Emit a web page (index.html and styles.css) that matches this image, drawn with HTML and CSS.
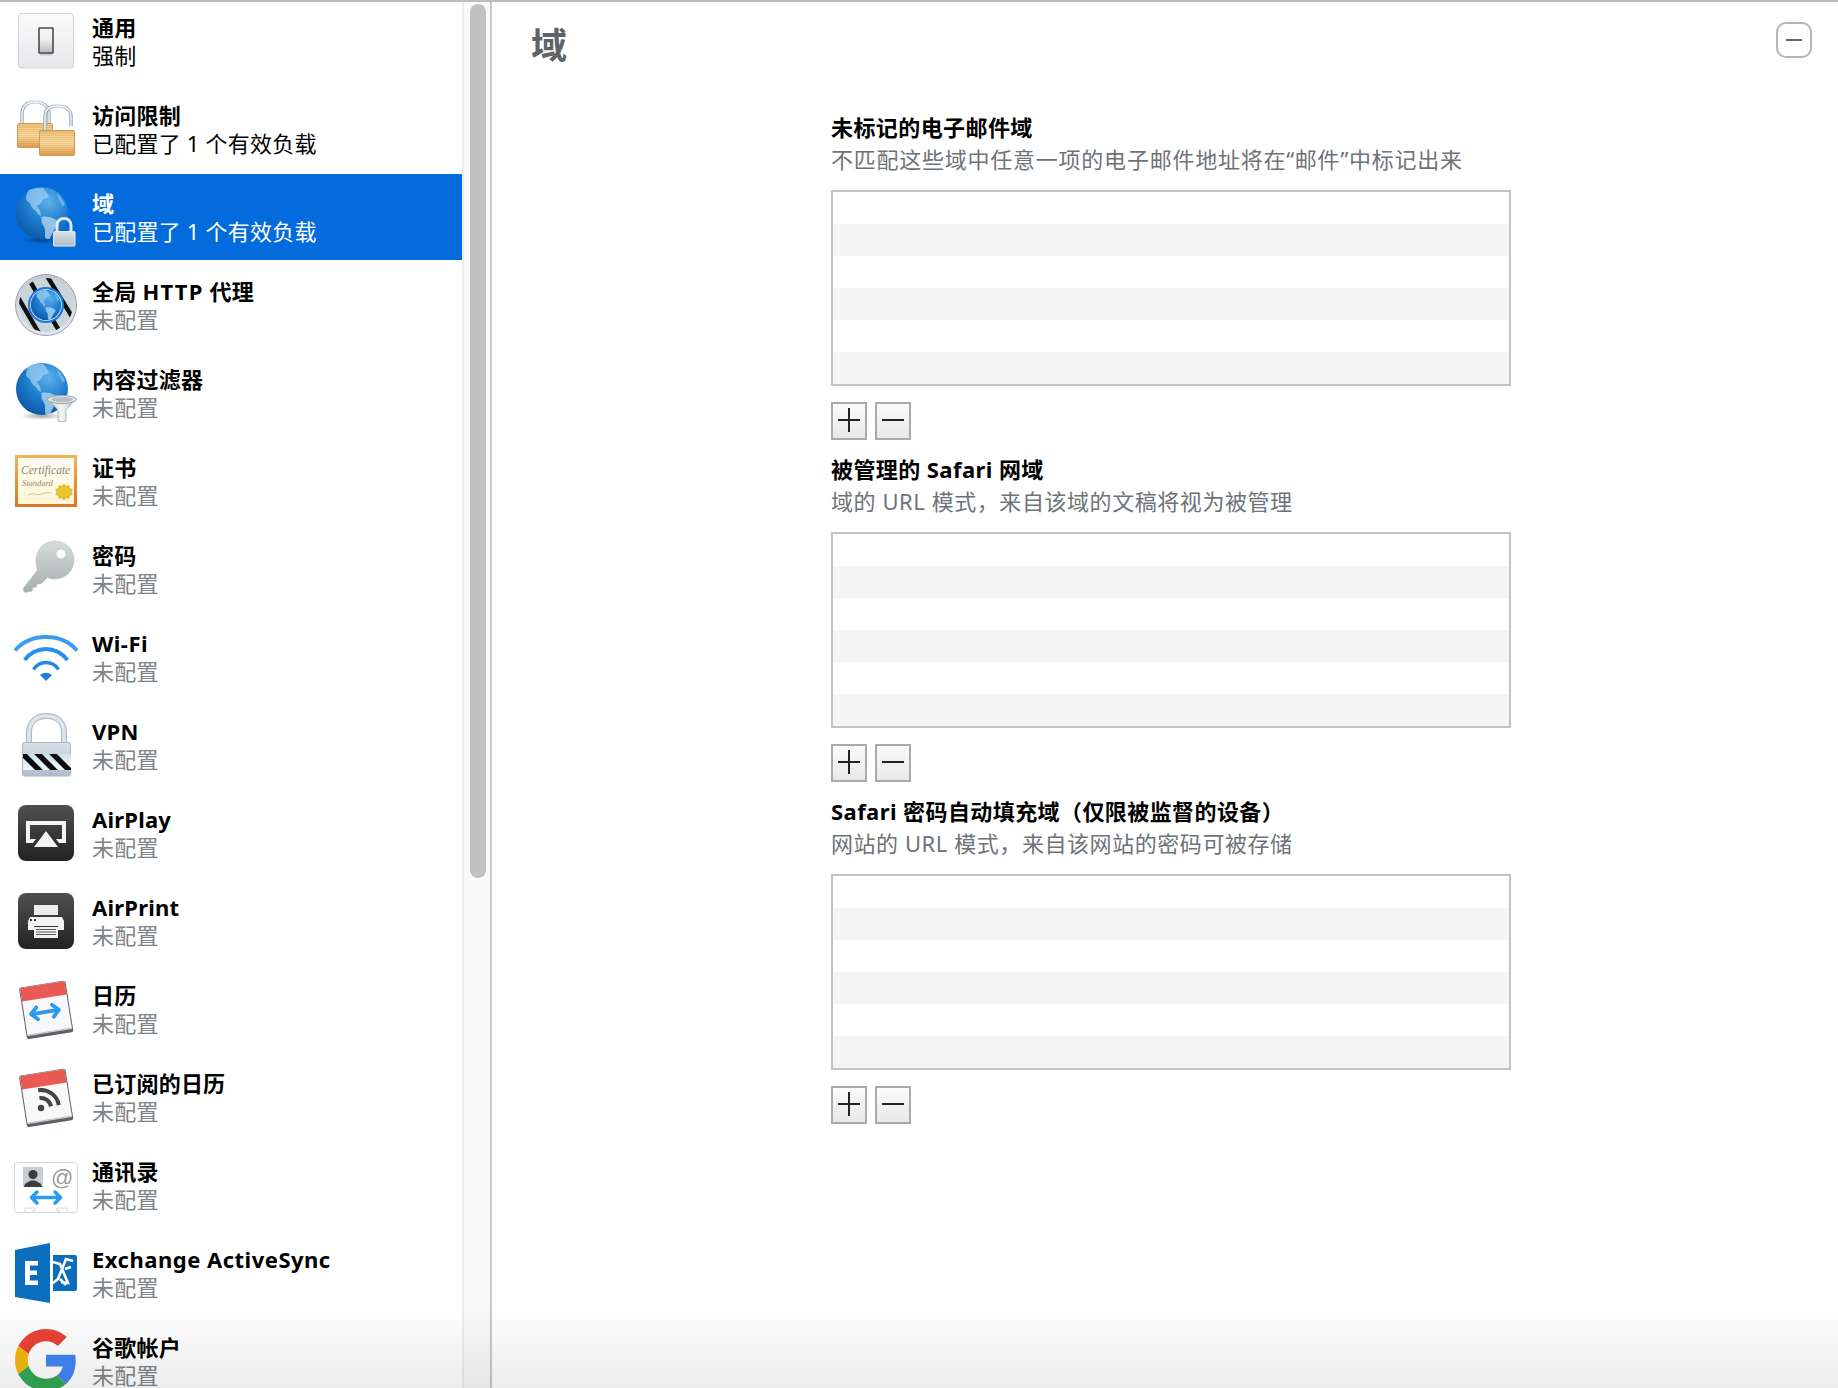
FILE: index.html
```html
<!DOCTYPE html>
<html lang="zh-CN">
<head>
<meta charset="utf-8">
<title>域</title>
<link rel="stylesheet" href="styles.css">
</head>
<body>
<svg class="defs" aria-hidden="true">
  <defs>
    <linearGradient id="gSwitchBg" x1="0" y1="0" x2="0" y2="1"><stop offset="0" stop-color="#fbfbfc"/><stop offset="1" stop-color="#e6e7ea"/></linearGradient>
    <linearGradient id="gSwitch" x1="0" y1="0" x2="0" y2="1"><stop offset="0" stop-color="#f4f4f4"/><stop offset=".45" stop-color="#f0f0f0"/><stop offset="1" stop-color="#b8b8b8"/></linearGradient>
    <pattern id="pBrass" width="4" height="2" patternUnits="userSpaceOnUse"><rect width="4" height="1" fill="#c88a38" fill-opacity=".22"/></pattern>
    <linearGradient id="gBrass" x1="0" y1="0" x2="0" y2="1"><stop offset="0" stop-color="#eec27a"/><stop offset=".5" stop-color="#f8dca0"/><stop offset="1" stop-color="#e09c4a"/></linearGradient>
    <linearGradient id="gSteel" x1="0" y1="0" x2="0" y2="1"><stop offset="0" stop-color="#d8dfe8"/><stop offset="1" stop-color="#b0bccc"/></linearGradient>
    <linearGradient id="gShackle" x1="0" y1="0" x2="1" y2="0"><stop offset="0" stop-color="#9aa6b6"/><stop offset=".5" stop-color="#d4dae2"/><stop offset="1" stop-color="#98a4b4"/></linearGradient>
    <radialGradient id="gGlobe" cx=".62" cy=".28" r=".85"><stop offset="0" stop-color="#5fb0ea"/><stop offset=".5" stop-color="#1c7ccd"/><stop offset="1" stop-color="#0a4f9c"/></radialGradient>
    <radialGradient id="gShadow"><stop offset="0" stop-color="#000" stop-opacity=".35"/><stop offset="1" stop-color="#000" stop-opacity="0"/></radialGradient>
    <linearGradient id="gRing" x1="0" y1="0" x2="0" y2="1"><stop offset="0" stop-color="#c4c8d0"/><stop offset="1" stop-color="#e4e8ee"/></linearGradient>
    <linearGradient id="gFunnel" x1="0" y1="0" x2="1" y2="0"><stop offset="0" stop-color="#c0c8cc"/><stop offset=".5" stop-color="#f4f6f6"/><stop offset="1" stop-color="#aab4b8"/></linearGradient>
    <linearGradient id="gFrame" x1="0" y1="0" x2="0" y2="1"><stop offset="0" stop-color="#f0b454"/><stop offset="1" stop-color="#d8762a"/></linearGradient>
    <linearGradient id="gCream" x1="0" y1="0" x2="0" y2="1"><stop offset="0" stop-color="#fffdf4"/><stop offset="1" stop-color="#fff6d4"/></linearGradient>
    <linearGradient id="gKey" x1="0" y1="0" x2="0" y2="1"><stop offset="0" stop-color="#d6dcdc"/><stop offset="1" stop-color="#a6aeae"/></linearGradient>
    <linearGradient id="gTile" x1="0" y1="0" x2="0" y2="1"><stop offset="0" stop-color="#505050"/><stop offset="1" stop-color="#222222"/></linearGradient>
    <linearGradient id="gWindow" x1="0" y1="0" x2="0" y2="1"><stop offset="0" stop-color="#cfe2ea"/><stop offset="1" stop-color="#eef6f8"/></linearGradient>
    <clipPath id="cRing"><circle cx="32" cy="32" r="27"/></clipPath>
    <clipPath id="cWindow"><rect x="9" y="41" width="48" height="16"/></clipPath>
    <symbol id="globe" viewBox="0 0 64 64">
      <circle cx="28" cy="28" r="26" fill="url(#gGlobe)"/>
      <path d="M15 5C20 3 25 2.500 29 3c2 2 4 4 6 9-3 2-4 1-6 3-1 3-4 4-6 6 1 3 3 3 3.500 6l.5 4c-3-1-4-3-5-5-3-2-5-4-6-8-2-1-3-2-4-4 0-3 1-6 3-9z" fill="#9ccdf0" fill-opacity=".75"/>
      <path d="M27.500 32c3-1 5 0 8 0 3 1 6 2 9 5-1 3-3 5-4 7-2 3-3 7-5 10-1.500 0-3 0-4-1-1-3 0-6-.5-9-1-3-3-5-3.500-7 0-2 0-4 0-5z" fill="#b0d6f0" fill-opacity=".8"/>
      <path d="M43 9c3 2 6 6 8 11l-3 1c-2-4-4-8-5-12z" fill="#a8d4f2" fill-opacity=".5"/>
    </symbol>
    <symbol id="calbase" viewBox="0 0 64 64">
      <g transform="rotate(-9 31.500 31.500)">
        <rect x="8.500" y="7" width="47" height="52" rx="2" fill="#5a6068"/>
        <rect x="9.500" y="7.500" width="45" height="47.500" fill="#f8f8f8"/>
        <rect x="9.500" y="7.500" width="45" height="13.500" fill="#ea5a55"/>
        <rect x="9.500" y="54.500" width="45" height="1.500" fill="#c8c8c8"/>
      </g>
    </symbol>
  </defs>
</svg>

<div class="app">
  <aside class="sidebar">
    <div class="list">

      <div class="row">
        <svg class="icon" viewBox="0 0 64 64">
          <rect x="4.500" y="4.500" width="55" height="54.500" rx="2.500" fill="url(#gSwitchBg)" stroke="#d2d4d8"/>
          <rect x="25" y="19" width="14" height="25" rx=".5" fill="url(#gSwitch)" stroke="#4a4a4a" stroke-width="1.600"/>
          <rect x="26" y="44.500" width="12" height="2" fill="#000" fill-opacity=".15"/>
        </svg>
        <div class="text"><div class="name">通用</div><div class="sub on">强制</div></div>
      </div>

      <div class="row">
        <svg class="icon" viewBox="0 0 64 64">
          <path d="M8 27V18C8 9 13 5 21 5s14 4 14 13v9" fill="none" stroke="url(#gShackle)" stroke-width="3.500"/>
          <path d="M8 27V18C8 9 13 5 21 5s14 4 14 13v9" fill="none" stroke="#eef1f4" stroke-width="1.500"/>
          <rect x="3.500" y="26.500" width="35" height="24" rx="1.500" fill="url(#gBrass)" stroke="#c89a58"/>
          <rect x="4" y="27" width="34" height="23" fill="url(#pBrass)"/>
          <path d="M31 34V20C31 12 36 9 43.500 9S57 12 57 20v9" fill="none" stroke="url(#gShackle)" stroke-width="3.500"/>
          <path d="M31 34V20C31 12 36 9 43.500 9S57 12 57 20v9" fill="none" stroke="#eef1f4" stroke-width="1.500"/>
          <rect x="25.500" y="33.500" width="35" height="25" rx="1.500" fill="url(#gBrass)" stroke="#c89a58"/>
          <rect x="26" y="34" width="34" height="24" fill="url(#pBrass)"/>
        </svg>
        <div class="text"><div class="name">访问限制</div><div class="sub on">已配置了 1 个有效负载</div></div>
      </div>

      <div class="row sel">
        <svg class="icon" viewBox="0 0 64 64">
          <ellipse cx="28" cy="55" rx="22" ry="4" fill="url(#gShadow)"/>
          <use href="#globe" width="64" height="64"/>
          <path d="M43 47V40.500C43 36 46 33.500 50 33.500s7 2.500 7 7V47" fill="none" stroke="#e4e8ee" stroke-width="3"/>
          <rect x="39.500" y="46.500" width="21.500" height="14.500" rx="1" fill="url(#gSteel)" stroke="#e8ecf2"/>
        </svg>
        <div class="text"><div class="name">域</div><div class="sub on">已配置了 1 个有效负载</div></div>
      </div>

      <div class="row">
        <svg class="icon" viewBox="0 0 64 64">
          <circle cx="32" cy="32" r="30.500" fill="url(#gRing)" stroke="#9ca2ac"/>
          <g clip-path="url(#cRing)">
            <rect width="64" height="64" fill="#c8d6da"/>
            <path d="M-2 14L26 62M10 -2L50 66M30 -2L68 60" stroke="#111" stroke-width="4.500" fill="none"/>
          </g>
          <circle cx="32" cy="32" r="18" fill="#1a78e0"/>
          <circle cx="32" cy="32" r="15.800" fill="#fff"/>
          <svg x="16.800" y="16.800" width="30.400" height="30.400" viewBox="2 2 52 52"><use href="#globe" width="64" height="64"/></svg>
        </svg>
        <div class="text"><div class="name">全局 <span class="lat-wide">HTTP</span> 代理</div><div class="sub">未配置</div></div>
      </div>

      <div class="row">
        <svg class="icon" viewBox="0 0 64 64">
          <ellipse cx="28" cy="55" rx="22" ry="4" fill="url(#gShadow)"/>
          <use href="#globe" width="64" height="64"/>
          <path d="M34 38L44 49V60.500H52V49L62 38z" fill="url(#gFunnel)" stroke="#a4aeb2" stroke-width=".8"/>
          <ellipse cx="48" cy="38.500" rx="14.500" ry="4" fill="#dfe4e6" stroke="#9aa4a8"/>
          <ellipse cx="48" cy="38.500" rx="11" ry="2.400" fill="#b6c0c4"/>
        </svg>
        <div class="text"><div class="name">内容过滤器</div><div class="sub">未配置</div></div>
      </div>

      <div class="row">
        <svg class="icon" viewBox="0 0 64 64">
          <rect x="1" y="6" width="62" height="52" fill="url(#gFrame)"/>
          <rect x="4" y="9" width="56" height="46" fill="url(#gCream)"/>
          <text class="cert big" x="7" y="25">Certificate</text>
          <text class="cert" x="8" y="37">Standard</text>
          <path d="M14 46c5-3 9 1 14-1s6-2 10-1" fill="none" stroke="#c0b8a0" stroke-width=".8"/>
          <path d="M50 35l2 2.500 3-1 .5 3 3 1-1.500 2.500 1.500 2.500-3 1-.5 3-3-1-2 2.500-2-2.500-3 1-.5-3-3-1 1.500-2.500-1.500-2.500 3-1 .5-3 3 1z" fill="#e8c428" stroke="#c8a020" stroke-width=".5"/>
        </svg>
        <div class="text"><div class="name">证书</div><div class="sub">未配置</div></div>
      </div>

      <div class="row">
        <svg class="icon" viewBox="0 0 64 64">
          <path fill-rule="evenodd" d="M41 4C51.500 4 60 12.500 60 23S51.500 42 41 42c-3 0-5-.5-7.500-1.500L27 47h-4l-.5 3-3.500.5-1 3.500-6.500 1.500C9.500 55 9 53 9.500 51L23.500 33C22.500 30 22 26 22 23 22 12.500 30.500 4 41 4zM47 12a5 5 0 1 0 0 10 5 5 0 0 0 0-10z" fill="url(#gKey)" stroke="#b4bcbc" stroke-width=".6"/>
        </svg>
        <div class="text"><div class="name">密码</div><div class="sub">未配置</div></div>
      </div>

      <div class="row">
        <svg class="icon" viewBox="0 0 64 64">
          <g fill="none">
            <path d="M1 25.500C10 15 22 12 32 12s22 3 31 13.500" stroke="#3a9cf0" stroke-width="3.800"/>
            <path d="M10.500 35C17 27 25 24 32 24s15 3 21.500 11" stroke="#2a8eec" stroke-width="3.800"/>
            <path d="M19.500 44.500C23 39 28 37.500 32 37.500s9 1.500 12.500 7" stroke="#2286ea" stroke-width="3.400"/>
          </g>
          <path d="M26 50c4-3 8-3 12 0l-6 6z" fill="#1a80e8"/>
        </svg>
        <div class="text"><div class="name"><span class="lat">Wi-Fi</span></div><div class="sub">未配置</div></div>
      </div>

      <div class="row">
        <svg class="icon" viewBox="0 0 64 64">
          <path d="M15 30V20C15 9 22 3 32.500 3S50 9 50 20v10" fill="none" stroke="#b0bccc" stroke-width="6"/>
          <path d="M15 30V20C15 9 22 3 32.500 3S50 9 50 20v10" fill="none" stroke="#dfe5ec" stroke-width="3.500"/>
          <rect x="8.500" y="29.500" width="48" height="33.500" rx="2" fill="url(#gSteel)" stroke="#aab6c6"/>
          <rect x="9" y="41" width="48" height="16" fill="url(#gWindow)"/>
          <g clip-path="url(#cWindow)"><path d="M5 37L28 60M20 37L43 60M35 37L58 60" stroke="#0c0c0c" stroke-width="5.500" fill="none"/></g>
        </svg>
        <div class="text"><div class="name">VPN</div><div class="sub">未配置</div></div>
      </div>

      <div class="row">
        <svg class="icon" viewBox="0 0 64 64">
          <rect x="4" y="4" width="56" height="56" rx="8" fill="url(#gTile)"/>
          <path d="M12 20H52V42H45L42 38H48V24H16V38H22L19 42H12z" fill="#f4f4f4"/>
          <path d="M32 30L44 46H20z" fill="#f4f4f4"/>
        </svg>
        <div class="text"><div class="name">AirPlay</div><div class="sub">未配置</div></div>
      </div>

      <div class="row">
        <svg class="icon" viewBox="0 0 64 64">
          <rect x="4" y="4" width="56" height="56" rx="8" fill="url(#gTile)"/>
          <rect x="20" y="16" width="24" height="10" fill="#ececec"/>
          <path d="M14 32L16 28H48L50 32V41H44V37H20V41H14z" fill="#f4f4f4"/>
          <rect x="16" y="30" width="2" height="2" fill="#333"/><rect x="20" y="30" width="2" height="2" fill="#333"/>
          <rect x="20" y="38" width="24" height="11" fill="#f4f4f4"/>
          <path d="M22 40.500H42M22 43H42M22 45.500H42" stroke="#444" stroke-width=".9"/>
        </svg>
        <div class="text"><div class="name">AirPrint</div><div class="sub">未配置</div></div>
      </div>

      <div class="row">
        <svg class="icon" viewBox="0 0 64 64">
          <use href="#calbase" width="64" height="64"/>
          <g transform="rotate(-9 31 35)" fill="none" stroke="#2a9af0" stroke-width="3.800" stroke-linecap="round" stroke-linejoin="round">
            <path d="M18 35H44M23 29L17 35L23 41M39 29L45 35L39 41"/>
          </g>
        </svg>
        <div class="text"><div class="name">日历</div><div class="sub">未配置</div></div>
      </div>

      <div class="row">
        <svg class="icon" viewBox="0 0 64 64">
          <use href="#calbase" width="64" height="64"/>
          <circle cx="27" cy="43" r="3.200" fill="#444"/>
          <g fill="none" stroke="#444" stroke-width="4" transform="rotate(-9 27 43)">
            <path d="M27 33A10 10 0 0 1 37 43"/>
            <path d="M27 25A18 18 0 0 1 45 43"/>
          </g>
        </svg>
        <div class="text"><div class="name">已订阅的日历</div><div class="sub">未配置</div></div>
      </div>

      <div class="row">
        <svg class="icon" viewBox="0 0 64 64">
          <rect x=".5" y="9.500" width="63" height="50" rx="3" fill="#fff" stroke="#d4d6d8"/>
          <path d="M11 60V55H21V58H18M53 60V55H43V58H46" fill="none" stroke="#d4d6d8"/>
          <rect x="9" y="14" width="20" height="20" fill="#c8ced2"/>
          <circle cx="19" cy="21.500" r="4.500" fill="#3c3c3c"/>
          <path d="M10 34C10.500 29.500 15 29 17 27.500H21C23 29 27.500 29.500 28 34z" fill="#3c3c3c"/>
          <text class="at" x="37" y="32">@</text>
          <g fill="none" stroke="#2a9af0" stroke-width="3.500" stroke-linecap="round" stroke-linejoin="round">
            <path d="M18 44.500H46M23 39L17.500 44.500L23 50M41 39L46.500 44.500L41 50"/>
          </g>
        </svg>
        <div class="text"><div class="name">通讯录</div><div class="sub">未配置</div></div>
      </div>

      <div class="row">
        <svg class="icon" viewBox="0 0 64 64">
          <path d="M1 9L36 2V62L1 56z" fill="#0a6ebd"/>
          <path d="M11 20H24V24.500H16V29.500H23V34H16V39.500H24V44H11z" fill="#fff"/>
          <path d="M39 14H61a2 2 0 0 1 2 2V48a2 2 0 0 1-2 2H39z" fill="#0a6ebd"/>
          <path d="M39 21L46 23L54 42L47 41M59 20L52 18L44 38L39 42M51 28L57 26M46 38L52 44" fill="none" stroke="#fff" stroke-width="2.600"/>
        </svg>
        <div class="text"><div class="name"><span class="lat">Exchange ActiveSync</span></div><div class="sub">未配置</div></div>
      </div>

      <div class="row">
        <svg class="icon" viewBox="-1 0 64 64">
          <g transform="scale(1.292)">
            <path fill="#EA4335" d="M24 9.500c3.540 0 6.710 1.220 9.210 3.600l6.850-6.850C35.900 2.380 30.470 0 24 0 14.620 0 6.510 5.380 2.560 13.220l7.980 6.190C12.430 13.720 17.740 9.500 24 9.500z"/>
            <path fill="#4285F4" d="M46.980 24.550c0-1.570-.15-3.090-.38-4.550H24v9.020h12.940c-.58 2.960-2.260 5.480-4.780 7.180l7.730 6c4.510-4.180 7.090-10.360 7.090-17.650z"/>
            <path fill="#F4B80A" d="M10.530 28.590c-.48-1.450-.76-2.990-.76-4.590s.27-3.140.76-4.590l-7.980-6.190C.92 16.460 0 20.120 0 24c0 3.880.92 7.540 2.560 10.780l7.970-6.190z"/>
            <path fill="#34A853" d="M24 48c6.480 0 11.930-2.130 15.890-5.810l-7.730-6c-2.150 1.450-4.920 2.300-8.160 2.300-6.260 0-11.570-4.220-13.470-9.910l-7.980 6.190C6.510 42.620 14.620 48 24 48z"/>
          </g>
        </svg>
        <div class="text"><div class="name">谷歌帐户</div><div class="sub">未配置</div></div>
      </div>

    </div>
    <div class="track"><div class="thumb"></div></div>
  </aside>

  <main class="main">
    <header class="head">
      <h1 class="title">域</h1>
      <button class="collapse" type="button"><span class="collapse-bar"></span></button>
    </header>
    <div class="form">
      <section class="section">
        <h2 class="label">未标记的电子邮件域</h2>
        <p class="desc desc-long">不匹配这些域中任意一项的电子邮件地址将在“邮件”中标记出来</p>
        <div class="table"><div></div><div></div><div></div><div></div><div></div><div></div></div>
        <div class="btns">
          <button class="btn" type="button"><span class="h"></span><span class="v"></span></button>
          <button class="btn" type="button"><span class="h"></span></button>
        </div>
      </section>
      <section class="section">
        <h2 class="label">被管理的 Safari 网域</h2>
        <p class="desc">域的 URL 模式，来自该域的文稿将视为被管理</p>
        <div class="table"><div></div><div></div><div></div><div></div><div></div><div></div></div>
        <div class="btns">
          <button class="btn" type="button"><span class="h"></span><span class="v"></span></button>
          <button class="btn" type="button"><span class="h"></span></button>
        </div>
      </section>
      <section class="section">
        <h2 class="label">Safari 密码自动填充域（仅限被监督的设备）</h2>
        <p class="desc">网站的 URL 模式，来自该网站的密码可被存储</p>
        <div class="table"><div></div><div></div><div></div><div></div><div></div><div></div></div>
        <div class="btns">
          <button class="btn" type="button"><span class="h"></span><span class="v"></span></button>
          <button class="btn" type="button"><span class="h"></span></button>
        </div>
      </section>
    </div>
  </main>
</div>
<div class="fade"></div>
</body>
</html>
```
FILE: styles.css
```css
* { box-sizing: border-box; }
html, body { height: 100%; }
body {
  margin: 0;
  overflow: hidden;
  background: #fff;
  color: #000;
  font-family: "Noto Sans", "Noto Sans CJK SC", sans-serif;
  font-size: 22px;
  line-height: 28px;
  position: relative;
}
.defs { position: absolute; width: 0; height: 0; }
.app {
  display: flex;
  height: 100%;
  border-top: 2px solid #bdbdbd;
}
.sidebar {
  display: flex;
  flex: none;
  width: 492px;
  border-right: 2px solid #c8c8c8;
}
.list {
  flex: none;
  width: 462px;
  overflow: hidden;
  display: flex;
  flex-direction: column;
}
.row {
  display: flex;
  flex: none;
  align-items: center;
  gap: 14px;
  height: 86px;
  margin-bottom: 2px;
  padding-left: 14px;
}
.row:first-child { margin-top: -4px; }
.row.sel { background: #036bdb; color: #fff; }
.icon { flex: none; width: 64px; height: 64px; overflow: hidden; }
.text { min-width: 0; letter-spacing: .22px; }
.name { font-weight: 700; white-space: nowrap; }
.lat { letter-spacing: .5px; }
.lat-wide { letter-spacing: 1.2px; }
.sub { color: #808488; white-space: nowrap; }
.sub.on { color: #000; }
.row.sel .sub.on { color: #fff; }
.track {
  flex: 1;
  background: #f9f9f9;
  border-left: 2px solid #ececec;
  padding: 2px 0 0 6px;
}
.thumb {
  width: 16px;
  height: 874px;
  border-radius: 8px;
  background: #c1c1c1;
}
.cert { font-family: "Liberation Serif", serif; font-style: italic; font-size: 8.5px; letter-spacing: 0; fill: #8e8878; }
.cert.big { font-size: 11.5px; }
.at { font-family: "Liberation Sans", sans-serif; font-size: 22px; letter-spacing: 0; fill: #9a9a9a; }

.main { flex: 1; min-width: 0; }
.head {
  display: flex;
  justify-content: space-between;
  align-items: flex-start;
  height: 66px;
  padding: 20px 26px 0 39px;
}
.title {
  margin: 1px 0 0;
  font-size: 36px;
  line-height: 46px;
  font-weight: 700;
  color: #5f6468;
}
.collapse {
  display: flex;
  align-items: center;
  justify-content: center;
  width: 36px;
  height: 36px;
  padding: 0;
  background: #fff;
  border: 2px solid #b4b4b4;
  border-radius: 10px;
}
.collapse-bar { display: block; width: 16px; height: 2px; background: #666; }
.form {
  display: flex;
  flex-direction: column;
  gap: 15px;
  width: 680px;
  margin: 45px 0 0 339px;
}
.label { margin: 0; font-size: 22px; line-height: 28px; font-weight: 700; color: #000; letter-spacing: .42px; }
.desc { margin: 4px 0 17px; color: #6e7378; white-space: nowrap; letter-spacing: .56px; }
.desc-long { letter-spacing: .76px; }
.table {
  height: 196px;
  border: 2px solid #c2c2c2;
  background: #fff;
}
.table > div { height: 32px; }
.table > div:nth-child(even) { background: #f4f4f4; }
.btns { display: flex; gap: 8px; margin-top: 16px; }
.btn {
  position: relative;
  width: 36px;
  height: 38px;
  padding: 0;
  border: 2px solid #aaa;
  background: linear-gradient(#fbfbfb, #e8e8e8);
}
.btn .h { position: absolute; left: 5px; right: 5px; top: 15px; height: 2px; background: #222; }
.btn .v { position: absolute; top: 4px; bottom: 6px; left: 15px; width: 2px; background: #222; }
.fade {
  position: absolute;
  left: 0;
  right: 0;
  bottom: 0;
  height: 84px;
  pointer-events: none;
  background: linear-gradient(rgba(0,0,0,0), rgba(0,0,0,.075));
}
```
